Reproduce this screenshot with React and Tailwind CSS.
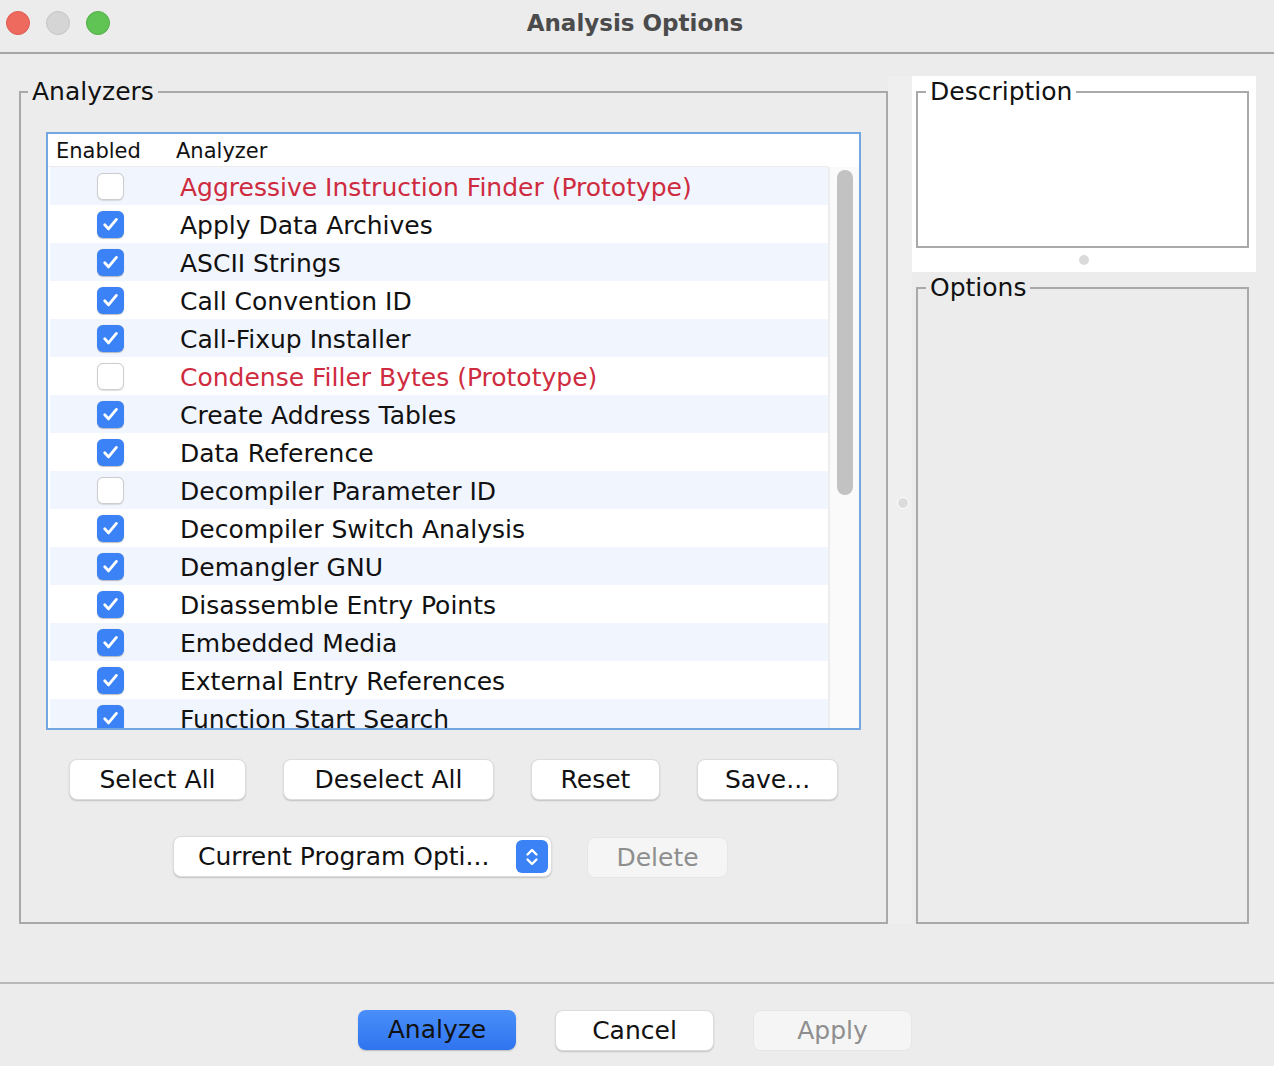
import React from 'react';

const analyzers = [
  { name: 'Aggressive Instruction Finder (Prototype)', checked: false, proto: true },
  { name: 'Apply Data Archives', checked: true },
  { name: 'ASCII Strings', checked: true },
  { name: 'Call Convention ID', checked: true },
  { name: 'Call-Fixup Installer', checked: true },
  { name: 'Condense Filler Bytes (Prototype)', checked: false, proto: true },
  { name: 'Create Address Tables', checked: true },
  { name: 'Data Reference', checked: true },
  { name: 'Decompiler Parameter ID', checked: false },
  { name: 'Decompiler Switch Analysis', checked: true },
  { name: 'Demangler GNU', checked: true },
  { name: 'Disassemble Entry Points', checked: true },
  { name: 'Embedded Media', checked: true },
  { name: 'External Entry References', checked: true },
  { name: 'Function Start Search', checked: true },
];

function Checkbox({ checked }) {
  if (checked) {
    return (
      <div className="w-[27px] h-[27px] rounded-[6px] bg-[#3a82f6] flex items-center justify-center shadow-[0_0.5px_1px_rgba(0,0,0,0.25)]">
        <svg width="21" height="21" viewBox="0 0 20 20" fill="none">
          <path d="M4.5 10.2l3.6 4L15.6 5.2" stroke="white" strokeWidth="2.7" strokeLinecap="round" strokeLinejoin="round" />
        </svg>
      </div>
    );
  }
  return (
    <div className="w-[27px] h-[27px] rounded-[6px] bg-white border border-[#cdcdcd] shadow-[0_0.5px_1px_rgba(0,0,0,0.12)]" />
  );
}

function Btn({ children, className = '', disabled }) {
  return (
    <div
      className={
        'flex items-center justify-center h-[41px] rounded-[8px] text-[25px] ' +
        (disabled
          ? 'bg-[#f5f5f5] text-[#8e8e8e] border border-[#e6e6e6] '
          : 'bg-white text-[#111] border border-[#dcdcdc] shadow-[0_1px_1.5px_rgba(0,0,0,0.18)] ') +
        className
      }
    >
      {children}
    </div>
  );
}

function Group({ title, className = '', legendClass = 'ml-[7px]', children }) {
  return (
    <fieldset className={'border-2 border-[#a9a9a9] ' + className}>
      <legend className={'px-[4px] text-[25px] leading-[28px] text-[#111] ' + legendClass}>{title}</legend>
      {children}
    </fieldset>
  );
}

export default function App() {
  return (
    <div className="w-[1274px] h-[1066px] bg-[#ececec] flex flex-col overflow-hidden font-['DejaVu_Sans',_sans-serif]">
      {/* title bar */}
      <div className="h-[54px] flex-shrink-0 flex items-center border-b-2 border-[#a6a6a6]">
        <div className="flex items-center gap-[16px] pl-[6px] -mt-[6px]">
          <div className="w-[24px] h-[24px] rounded-full bg-[#ee6a5f] border border-[#dd5a50]" />
          <div className="w-[24px] h-[24px] rounded-full bg-[#d5d5d5] border border-[#c6c6c6]" />
          <div className="w-[24px] h-[24px] rounded-full bg-[#5fc454] border border-[#51ad46]" />
        </div>
        <div className="flex-1 text-center pr-[114px] text-[23px] font-bold text-[#4b4b4b] -mt-[6px]">
          Analysis Options
        </div>
      </div>

      {/* main */}
      <div className="h-[928px] flex-shrink-0 flex items-start pt-[22px]">
        <Group title="Analyzers" className="ml-[19px] mt-[2px] w-[869px] h-[846px]">
          <div className="mt-[26px] mx-auto w-[815px] h-[598px] border-2 border-[#74a6e2] bg-white flex flex-col">
            <div className="h-[33px] flex-shrink-0 flex items-center pt-[3px] text-[21px] text-[#111] border-b border-[#ececec] mr-[31px]">
              <div className="pl-[8px] w-[128px]">Enabled</div>
              <div>Analyzer</div>
            </div>
            <div className="flex-1 flex overflow-hidden">
              <div className="flex-1 pl-[2px] overflow-hidden">
                {analyzers.map((a, i) => (
                  <div
                    key={a.name}
                    className={'h-[38px] flex items-center ' + (i % 2 === 0 ? 'bg-[#f1f5fd]' : 'bg-white')}
                  >
                    <div className="w-[120px] flex justify-center">
                      <Checkbox checked={a.checked} />
                    </div>
                    <div className={'pl-[10px] pt-[3px] text-[25px] ' + (a.proto ? 'text-[#cf2b40]' : 'text-[#111]')}>{a.name}</div>
                  </div>
                ))}
              </div>
              <div className="w-[31px] bg-[#fafafa] border-l-2 border-[#ececec] pt-[3px] flex justify-center">
                <div className="w-[16px] h-[325px] rounded-full bg-[#c2c2c2]" />
              </div>
            </div>
          </div>

          <div className="mt-[29px] flex justify-center gap-[37px]">
            <Btn className="w-[177px]">Select All</Btn>
            <Btn className="w-[211px]">Deselect All</Btn>
            <Btn className="w-[129px]">Reset</Btn>
            <Btn className="w-[141px]">Save...</Btn>
          </div>

          <div className="mt-[36px] flex justify-center gap-[35px] pr-[6px]">
            <div className="w-[379px] h-[41px] rounded-[8px] bg-white border border-[#dcdcdc] shadow-[0_1px_1.5px_rgba(0,0,0,0.18)] flex items-center pl-[24px] pr-[3px]">
              <div className="flex-1 text-[25px] text-[#111]">Current Program Opti...</div>
              <div className="w-[32px] h-[33px] rounded-[6px] bg-[#3a82f6] flex items-center justify-center">
                <svg width="16" height="22" viewBox="0 0 16 22" fill="none">
                  <path d="M3.5 8.5L8 4l4.5 4.5" stroke="white" strokeWidth="2.4" strokeLinecap="round" strokeLinejoin="round" />
                  <path d="M3.5 13.5L8 18l4.5-4.5" stroke="white" strokeWidth="2.4" strokeLinecap="round" strokeLinejoin="round" />
                </svg>
              </div>
            </div>
            <Btn disabled className="w-[141px] h-[40px] mt-[1px]">Delete</Btn>
          </div>
        </Group>

        {/* splitter */}
        <div className="w-[24px] h-[848px] flex items-center justify-center pl-[6px] bg-[#efefef]">
          <div className="w-[12px] h-[12px] rounded-full bg-[#dcdcdc] border border-white mt-[6px]" />
        </div>

        {/* right column */}
        <div className="w-[344px] flex flex-col">
          <div className="h-[196px] bg-white pt-[2px] flex flex-col">
            <Group title="Description" legendClass="ml-[8px]" className="ml-[4px] w-[333px] h-[170px]" />
            <div className="flex-1 flex items-center justify-center">
              <div className="w-[10px] h-[10px] rounded-full bg-[#dadada]" />
            </div>
          </div>
          <Group title="Options" legendClass="ml-[8px]" className="mt-[2px] ml-[4px] w-[333px] h-[650px]" />
        </div>
      </div>

      {/* footer */}
      <div className="flex-1 border-t-2 border-[#b8b8b8] flex justify-center gap-[39px] pt-[26px] pr-[4px]">
        <div className="w-[158px] h-[40px] rounded-[8px] bg-gradient-to-b from-[#4a8ff8] to-[#2f74ef] shadow-[0_1px_1.5px_rgba(0,0,0,0.2)] flex items-center justify-center text-[25px] text-[#111]">
          Analyze
        </div>
        <Btn className="w-[159px] h-[40px]">Cancel</Btn>
        <Btn disabled className="w-[159px] h-[40px]">Apply</Btn>
      </div>
    </div>
  );
}
